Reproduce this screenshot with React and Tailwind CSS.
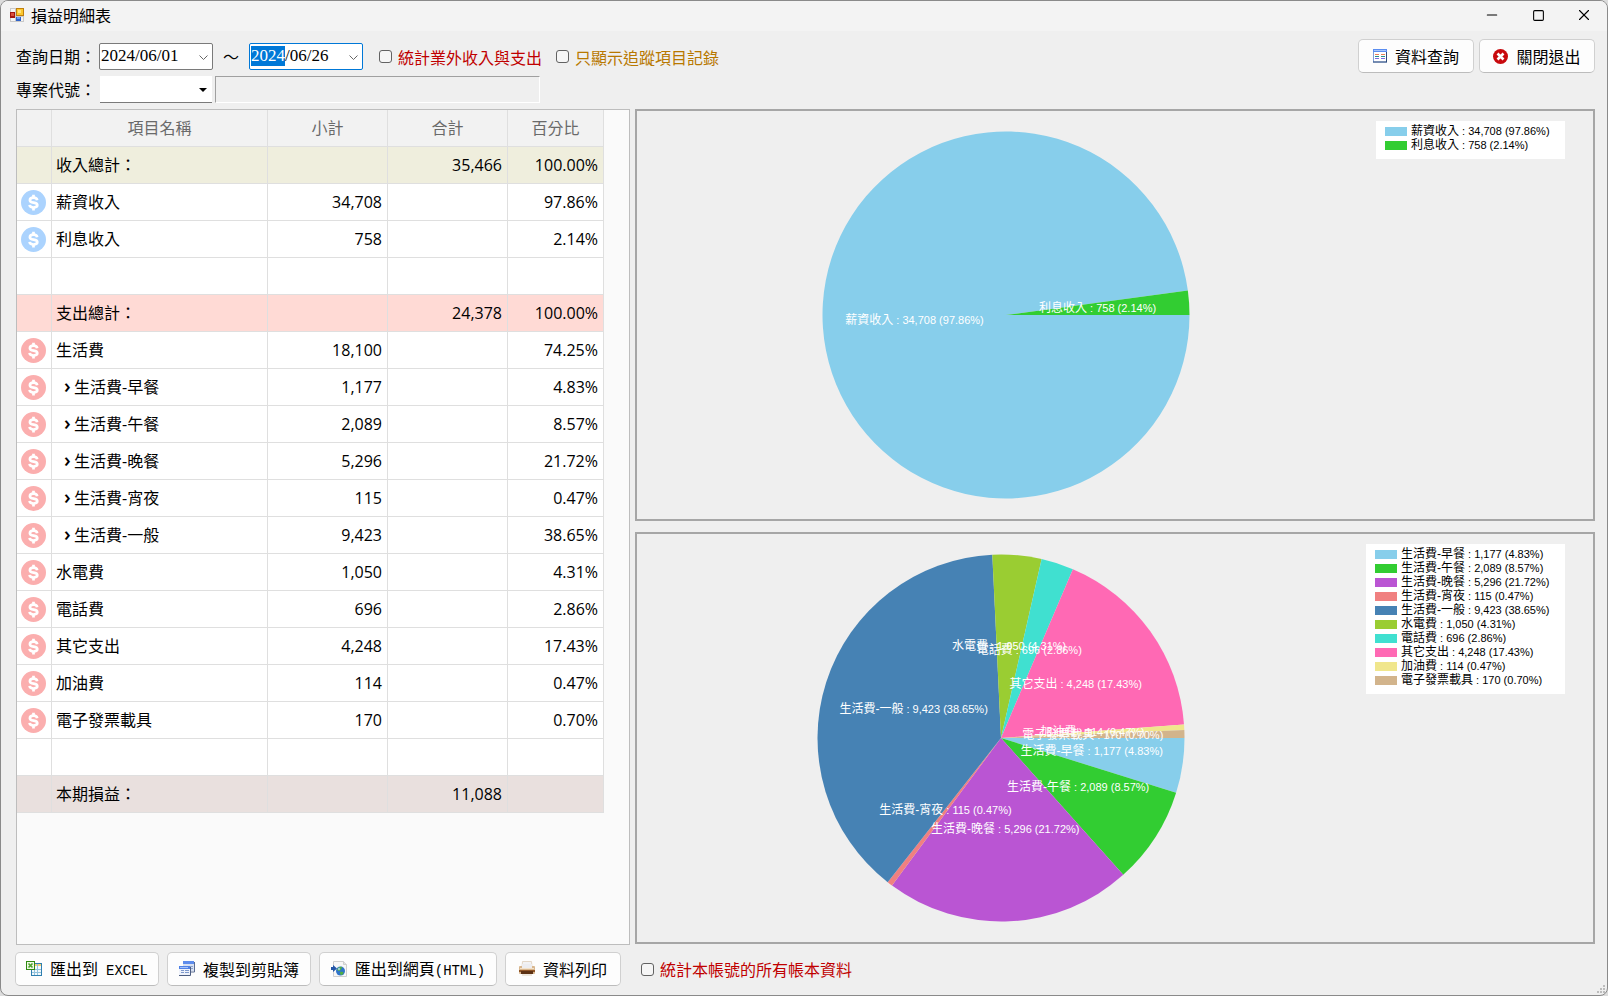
import { useEffect, useRef, useState } from 'react'
import { Minus, Square, X } from 'lucide-react'

const rows = [
  { type: 'income', name: '收入總計：', total: '35,466', pct: '100.00%' },
  { icon: 'in', name: '薪資收入', sub: '34,708', pct: '97.86%' },
  { icon: 'in', name: '利息收入', sub: '758', pct: '2.14%' },
  {},
  { type: 'expense', name: '支出總計：', total: '24,378', pct: '100.00%' },
  { icon: 'out', name: '生活費', sub: '18,100', pct: '74.25%' },
  { icon: 'out', child: true, name: '生活費-早餐', sub: '1,177', pct: '4.83%' },
  { icon: 'out', child: true, name: '生活費-午餐', sub: '2,089', pct: '8.57%' },
  { icon: 'out', child: true, name: '生活費-晚餐', sub: '5,296', pct: '21.72%' },
  { icon: 'out', child: true, name: '生活費-宵夜', sub: '115', pct: '0.47%' },
  { icon: 'out', child: true, name: '生活費-一般', sub: '9,423', pct: '38.65%' },
  { icon: 'out', name: '水電費', sub: '1,050', pct: '4.31%' },
  { icon: 'out', name: '電話費', sub: '696', pct: '2.86%' },
  { icon: 'out', name: '其它支出', sub: '4,248', pct: '17.43%' },
  { icon: 'out', name: '加油費', sub: '114', pct: '0.47%' },
  { icon: 'out', name: '電子發票載具', sub: '170', pct: '0.70%' },
  {},
  { type: 'net', name: '本期損益：', total: '11,088' },
]

const income = [
  { name: '薪資收入', value: 34708, pct: '97.86%', color: '#87ceeb' },
  { name: '利息收入', value: 758, pct: '2.14%', color: '#32cd32' },
]

const expense = [
  { name: '生活費-早餐', value: 1177, pct: '4.83%', color: '#87ceeb' },
  { name: '生活費-午餐', value: 2089, pct: '8.57%', color: '#32cd32' },
  { name: '生活費-晚餐', value: 5296, pct: '21.72%', color: '#ba55d3' },
  { name: '生活費-宵夜', value: 115, pct: '0.47%', color: '#f08080' },
  { name: '生活費-一般', value: 9423, pct: '38.65%', color: '#4682b4' },
  { name: '水電費', value: 1050, pct: '4.31%', color: '#9acd32' },
  { name: '電話費', value: 696, pct: '2.86%', color: '#40e0d0' },
  { name: '其它支出', value: 4248, pct: '17.43%', color: '#ff69b4' },
  { name: '加油費', value: 114, pct: '0.47%', color: '#f0e68c' },
  { name: '電子發票載具', value: 170, pct: '0.70%', color: '#d2b48c' },
]

const rowColors = {
  income: 'bg-[#efeedd]',
  expense: 'bg-[#ffdad5]',
  net: 'bg-[#e9e0de]',
}

function AppIcon() {
  return (
    <svg width="14" height="14" viewBox="0 0 14 14" aria-hidden="true">
      <rect width="14" height="14" fill="#c9c9c9" />
      <rect x="1" y="1" width="4" height="3" fill="#f4f4f4" />
      <rect x="1" y="10" width="4" height="3" fill="#f4f4f4" />
      <rect x="11" y="9" width="2" height="4" fill="#f4f4f4" />
      <rect x="0" y="4" width="5" height="6" fill="#a3160f" />
      <rect x="1" y="5" width="3" height="3" fill="#d9503c" />
      <rect x="6" y="0" width="8" height="8" fill="#c07f0c" />
      <rect x="7" y="1" width="6" height="6" fill="#fbc72e" />
      <rect x="8" y="2" width="3" height="3" fill="#ffe27a" />
      <rect x="6" y="9" width="5" height="4" fill="#2f62c8" />
      <rect x="7" y="9" width="3" height="2" fill="#6d9df0" />
    </svg>
  )
}

function MoneyIcon({ className }) {
  return (
    <svg width="25" height="25" viewBox="0 0 25 25" className={className} aria-hidden="true">
      <circle cx="12.5" cy="12.5" r="12.5" fill="currentColor" />
      <g fill="none" stroke="#fff" strokeWidth="2.7">
        <path d="M16.2 10.200C15.900 8.500 14.500 7.700 12.500 7.700C10.200 7.700 8.900 8.700 8.900 10.200C8.900 13.900 16.300 11.500 16.300 15.100C16.300 16.600 14.800 17.500 12.500 17.500C10.200 17.500 8.800 16.600 8.600 14.900" />
        <path d="M12.500 4.800v3M12.500 17.400v3" />
      </g>
    </svg>
  )
}

function QueryIcon() {
  return (
    <svg width="14" height="14" viewBox="0 0 14 14" aria-hidden="true">
      <rect x="0.5" y="0.5" width="13" height="12.5" fill="#fff" stroke="#7f9fd8" />
      <path d="M0 13h14M13.5 3v10" stroke="#2f4a78" />
      <rect width="14" height="3" fill="#5b8df0" />
      <rect x="1" y="1" width="12" height="1" fill="#a9c6fb" />
      <path d="M2 5.500h4M8 5.500h4" stroke="#e8805a" />
      <path d="M2 7.500h4M8 7.500h4" stroke="#2b8f8a" />
      <path d="M2 9.500h4M8 9.500h4" stroke="#7a6ae0" />
    </svg>
  )
}

function CloseIcon() {
  return (
    <svg width="15" height="15" viewBox="0 0 15 15" aria-hidden="true">
      <circle cx="7.5" cy="7.5" r="7.5" fill="#c8090d" />
      <path d="M4.500 4.500l6 6M10.500 4.500l-6 6" stroke="#fff" strokeWidth="2.6" />
    </svg>
  )
}

function ExcelIcon() {
  return (
    <svg width="16" height="16" viewBox="0 0 16 16" aria-hidden="true">
      <rect x="5.5" y="2.5" width="10" height="12" fill="#f2f9fd" stroke="#2f7fb0" />
      <rect x="9" y="3" width="6" height="2" fill="#f2cf7a" />
      <path d="M6 8.500h9M6 11.500h9M8.500 5v9M11.500 3v11" stroke="#93c3de" />
      <rect x="0.5" y="0.5" width="8" height="8" fill="#eef8e4" stroke="#2f8a10" />
      <path d="M2.500 2.500l4 4M6.500 2.500l-4 4" stroke="#4ba32a" strokeWidth="1.6" />
    </svg>
  )
}

function CopyIcon() {
  return (
    <svg width="16" height="16" viewBox="0 0 16 16" aria-hidden="true">
      <rect x="4" y="0" width="11" height="10" fill="#d7e0f2" />
      <rect x="4" y="0" width="11" height="3" fill="#5d8cec" />
      <path d="M15.500 1v10H11" fill="none" stroke="#5a6c92" />
      <path d="M6 5.500h8M12 7.500h2" stroke="#8ba3cf" />
      <rect x="0" y="5" width="11" height="9" fill="#eef2fb" />
      <rect x="0" y="5" width="11" height="3" fill="#4f81e6" />
      <rect x="1" y="6" width="8" height="1" fill="#a4c2fa" />
      <path d="M11.500 6v8.500H0" fill="none" stroke="#4c5d82" />
      <path d="M2 9.500h3M6 9.500h4M2 11.500h3M6 11.500h4" stroke="#7e99cc" />
    </svg>
  )
}

function HtmlIcon() {
  return (
    <svg width="16" height="16" viewBox="0 0 16 16" aria-hidden="true">
      <path d="M2.500.5h10l3 3v12h-13z" fill="#f7f7f7" stroke="#cfcfcf" />
      <path d="M12.500.5v3h3" fill="#e4e4e4" stroke="#cfcfcf" />
      <circle cx="9.5" cy="10" r="4.5" fill="#2f74c9" />
      <path d="M6 8.500c1.500-2.500 4-3 5-2.500.5 1-1 1.500-1 2.500s-2 2-4 0zM9 11c2-.5 3.500 0 3.500 1-.5 1.500-2 2.300-2.500 2-.7-.7-1.500-2-1-3z" fill="#4fae45" />
      <circle cx="8" cy="8" r="1.2" fill="#bfe3ff" opacity="0.7" />
      <path d="M0 6h2V4l4 3.500L2 11V9H0z" fill="#2456a8" />
    </svg>
  )
}

function PrintIcon() {
  return (
    <svg width="16" height="16" viewBox="0 0 16 16" aria-hidden="true">
      <path d="M3.500.5h9l.5 6H3z" fill="#f2f2f4" stroke="#e3d6c6" />
      <rect x="0" y="5" width="16" height="8" rx="1" fill="#d9b78f" />
      <rect x="3" y="3" width="10" height="4" fill="#ededf0" />
      <rect x="0" y="9" width="16" height="2" fill="#8f5426" />
      <rect x="2" y="10" width="12" height="3" fill="#5c3114" />
      <rect x="1" y="7" width="14" height="1" fill="#f3e2cb" />
      <rect x="3" y="13" width="10" height="2" fill="#ece5db" />
    </svg>
  )
}

function ToolButton({ icon, children, className }) {
  return (
    <button
      type="button"
      className={`flex h-[34px] shrink-0 items-center justify-center gap-2 rounded-[5px] border border-[#d0d0d0] border-b-[#bcbcbc] bg-[#fdfdfd] text-base leading-none whitespace-nowrap hover:bg-[#e5f1fb] ${className}`}
    >
      {icon}
      <span>{children}</span>
    </button>
  )
}

function Check({ label, className }) {
  return (
    <label className={`flex items-center gap-[6px] leading-none whitespace-nowrap ${className}`}>
      <input
        type="checkbox"
        className="size-[13px] appearance-none rounded-[3px] border border-[#626262] bg-[#f6f6f6] checked:bg-[#0078d7]"
      />
      {label}
    </label>
  )
}

function DateBox({ id, value, onChange, inputRef, className }) {
  return (
    <div className={`relative h-[27px] w-[114px] rounded-xs border bg-white ${className}`}>
      <input
        id={id}
        ref={inputRef}
        value={value}
        onChange={(e) => onChange(e.target.value)}
        className="block h-full w-[90px] bg-transparent pb-px pl-px font-['Liberation_Serif',serif] text-[17px] leading-5 outline-none selection:bg-[#0078d7] selection:text-white"
      />
      <svg width="9" height="6" viewBox="0 0 9 6" className="absolute top-[11px] right-1 text-[#666]" aria-hidden="true">
        <path d="M.5.5l4 4 4-4" fill="none" stroke="currentColor" />
      </svg>
    </div>
  )
}

function PieChart({ data }) {
  const r = 183.5
  const sum = data.reduce((acc, d) => acc + d.value, 0)
  let angle = 0
  const slices = data.map((d) => {
    const start = angle
    const end = angle + (d.value / sum) * Math.PI * 2
    angle = end
    const mid = (start + end) / 2
    return {
      ...d,
      path: `M0 0L${r * Math.cos(start)} ${r * Math.sin(start)}A${r} ${r} 0 ${end - start > Math.PI ? 1 : 0} 1 ${r * Math.cos(end)} ${r * Math.sin(end)}Z`,
      x: (r / 2) * Math.cos(mid),
      y: (r / 2) * Math.sin(mid),
    }
  })
  return (
    <svg width="368" height="368" viewBox="-184 -184 368 368" role="img">
      {slices.map((s) => <path key={s.name} d={s.path} fill={s.color} />)}
      {slices.map((s) => (
        <text key={s.name} x={s.x} y={s.y + 3} textAnchor="middle" fill="#fff" className="text-[11px]">
          <tspan className="text-[12px]">{s.name}</tspan> : {s.value.toLocaleString('en-US')} ({s.pct})
        </text>
      ))}
    </svg>
  )
}

function ChartPanel({ data, legendWidth }) {
  return (
    <section className="flex flex-1 border-2 border-[#a6a6a6] font-['Liberation_Sans','Noto_Sans_CJK_TC',sans-serif]">
      <div className="flex flex-1 items-center justify-center pr-0.5">
        <PieChart data={data} />
      </div>
      <ul className={`mt-[10px] mr-7 shrink-0 self-start bg-white pt-[3px] pb-[7px] pl-[9px] text-[11px] ${legendWidth}`}>
        {data.map((d) => (
          <li key={d.name} className="flex h-[14px] items-center gap-1 leading-[14px] whitespace-nowrap">
            <span className="h-[9px] w-[22px]" style={{ backgroundColor: d.color }}></span>
            <span><span className="text-[12px]">{d.name}</span> : {d.value.toLocaleString('en-US')} ({d.pct})</span>
          </li>
        ))}
      </ul>
    </section>
  )
}

function DetailTable() {
  const cell = 'border-r border-b border-[#dfdfdf]'
  return (
    <table className="w-[587px] table-fixed border-separate border-spacing-0 font-['Open_Sans','Noto_Sans_CJK_TC',sans-serif] text-base leading-6">
      <colgroup>
        <col className="w-[35px]" />
        <col className="w-[216px]" />
        <col className="w-[120px]" />
        <col className="w-[120px]" />
        <col className="w-[96px]" />
      </colgroup>
      <thead>
        <tr className="h-[37px] bg-[#f2f2f2] text-[#6a6a6a]">
          {['', '項目名稱', '小計', '合計', '百分比'].map((h, i) => (
            <th key={i} className={`${cell} p-0 font-normal`}>{h}</th>
          ))}
        </tr>
      </thead>
      <tbody>
        {rows.map((row, i) => (
          <tr key={i} className={`h-[37px] ${rowColors[row.type] || 'bg-white'}`}>
            <td className={`${cell} p-0`}>
              {row.icon && <MoneyIcon className={row.icon === 'in' ? 'ml-1 text-[#abd3fe]' : 'ml-1 text-[#fbaeae]'} />}
            </td>
            <td className={`${cell} py-0 pr-0 pl-1`}>
              {row.child && <span className="inline-block w-[18px] pl-2 text-xl leading-none font-semibold">›</span>}
              {row.name}
            </td>
            <td className={`${cell} py-0 pr-[5px] pl-0 text-right`}>{row.sub}</td>
            <td className={`${cell} py-0 pr-[5px] pl-0 text-right`}>{row.total}</td>
            <td className={`${cell} py-0 pr-[5px] pl-0 text-right`}>{row.pct}</td>
          </tr>
        ))}
      </tbody>
    </table>
  )
}

export default function App() {
  const [from, setFrom] = useState('2024/06/01')
  const [to, setTo] = useState('2024/06/26')
  const toRef = useRef(null)

  // start with the year part of the end date selected
  useEffect(() => {
    toRef.current.focus()
    toRef.current.setSelectionRange(0, 4)
  }, [])

  return (
    <div className="bg-[#dcdcdc]">
      <div className="relative flex min-h-screen flex-col overflow-hidden rounded-lg border border-[#8a8a8a] bg-[#efefef] font-['Noto_Sans_CJK_TC',sans-serif] text-base text-black">
        {/* Title bar */}
        <header className="flex h-[30px] items-center bg-[#f3f3f3] pb-0.5 pl-[9px]">
          <AppIcon />
          <h1 className="ml-[7px] flex-1 leading-6">損益明細表</h1>
          <button type="button" aria-label="最小化" className="flex h-full w-[46px] items-center justify-center">
            <Minus size={16} strokeWidth={1.7} />
          </button>
          <button type="button" aria-label="最大化" className="flex h-full w-[46px] items-center justify-center">
            <Square size={13} strokeWidth={2} />
          </button>
          <button type="button" aria-label="關閉" className="flex h-full w-[46px] items-center justify-center">
            <X size={18} strokeWidth={1.5} />
          </button>
        </header>

        {/* Query conditions */}
        <div className="flex justify-between pt-2 pr-3 pl-[15px]">
          <div className="flex flex-col gap-[6px] pt-1">
            <div className="flex h-[27px] items-center">
              <label htmlFor="date-from" className="w-[83px] pb-0.5 whitespace-nowrap">查詢日期：</label>
              <DateBox id="date-from" value={from} onChange={setFrom} className="border-[#7a7a7a]" />
              <label htmlFor="date-to" className="w-9 pb-0.5 text-center">～</label>
              <DateBox id="date-to" value={to} onChange={setTo} inputRef={toRef} className="border-[#0078d7]" />
              <Check label="統計業外收入與支出" className="ml-4 text-[#c00000]" />
              <Check label="只顯示追蹤項目記錄" className="ml-[14px] text-[#b87800]" />
            </div>
            <div className="flex h-[27px] items-center">
              <label htmlFor="project" className="w-[84px] pb-0.5 whitespace-nowrap">專案代號：</label>
              <div className="relative h-[27px] w-28">
                <select id="project" className="h-full w-full appearance-none border-b border-[#7a7a7a] bg-white px-1 outline-none">
                  <option></option>
                </select>
                <svg width="8" height="4" viewBox="0 0 8 4" className="pointer-events-none absolute top-3 right-[5px]" aria-hidden="true">
                  <path d="M0 0h8L4 4z" fill="#000" />
                </svg>
              </div>
              <input
                readOnly
                aria-label="專案名稱"
                className="ml-[3px] h-[27px] w-[325px] border border-t-[#a0a0a0] border-r-white border-b-white border-l-[#a0a0a0] bg-transparent px-1 outline-none"
              />
            </div>
          </div>
          <div className="flex gap-[5px]">
            <ToolButton icon={<QueryIcon />} className="w-[116px]">資料查詢</ToolButton>
            <ToolButton icon={<CloseIcon />} className="w-[116px]">關閉退出</ToolButton>
          </div>
        </div>

        {/* Detail list + charts */}
        <main className="flex flex-1 gap-[5px] pt-[6px] pr-3 pl-[15px]">
          <div className="w-[614px] shrink-0 border border-[#bdbdbd] bg-[#fafafa]">
            <DetailTable />
          </div>
          <div className="flex flex-1 flex-col gap-[11px] pb-px">
            <ChartPanel data={income} legendWidth="w-[189px]" />
            <ChartPanel data={expense} legendWidth="w-[199px]" />
          </div>
        </main>

        {/* Export actions */}
        <footer className="flex items-center gap-2 pt-[7px] pr-3 pb-[9px] pl-[14px]">
          <ToolButton icon={<ExcelIcon />} className="w-36">
            匯出到<span className="ml-2 font-['Liberation_Mono',monospace] text-[14px]">EXCEL</span>
          </ToolButton>
          <ToolButton icon={<CopyIcon />} className="w-36">複製到剪貼簿</ToolButton>
          <ToolButton icon={<HtmlIcon />} className="w-[178px]">
            匯出到網頁<span className="font-['Liberation_Mono',monospace] text-[14px]">(HTML)</span>
          </ToolButton>
          <ToolButton icon={<PrintIcon />} className="w-[116px]">資料列印</ToolButton>
          <Check label="統計本帳號的所有帳本資料" className="ml-3 text-[#c00000]" />
        </footer>

        {/* Resize grip */}
        <svg width="8" height="8" viewBox="0 0 8 8" className="absolute right-[2px] bottom-[2px]" aria-hidden="true">
          <path d="M6 0h2v2H6zM3 3h2v2H3zM6 3h2v2H6zM0 6h2v2H0zM3 6h2v2H3zM6 6h2v2H6z" fill="#bcbcbc" />
        </svg>
      </div>
    </div>
  )
}
